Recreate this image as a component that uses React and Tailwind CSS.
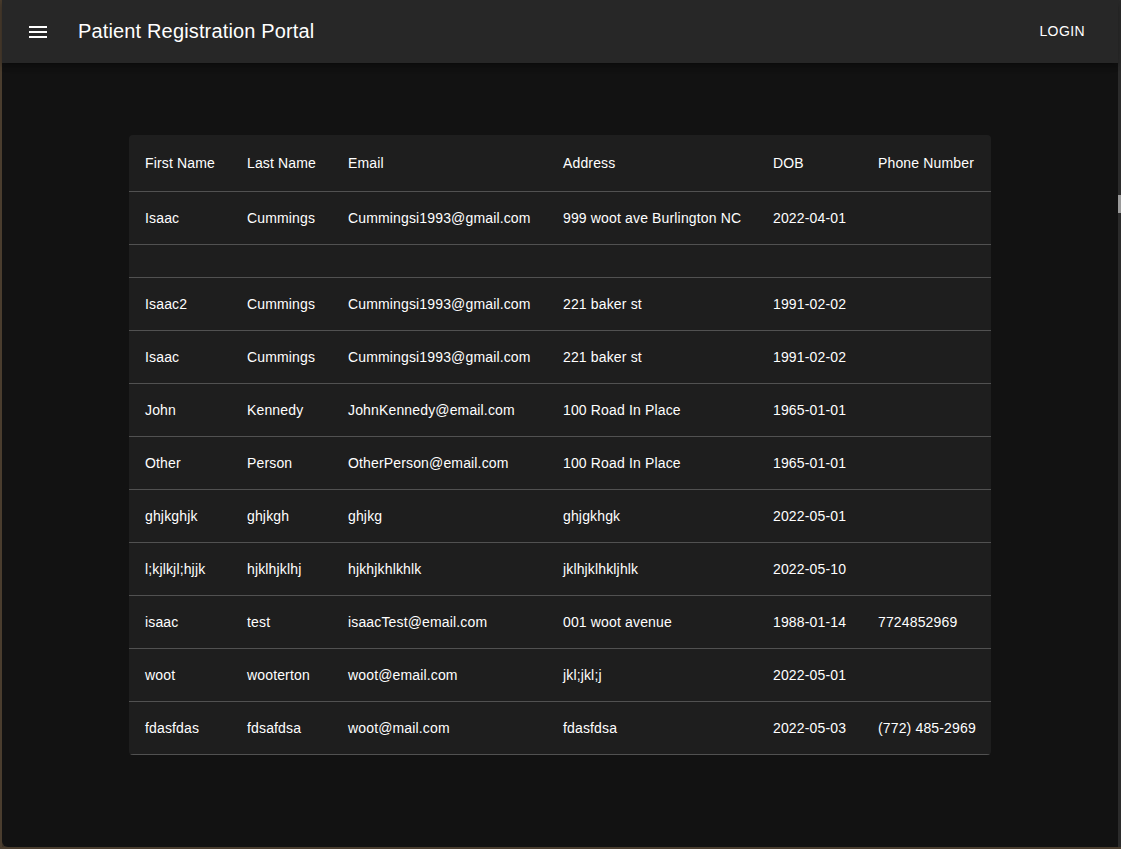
const ROWS = [
  ['Isaac', 'Cummings', 'Cummingsi1993@gmail.com', '999 woot ave Burlington NC', '2022-04-01', ''],
  null,
  ['Isaac2', 'Cummings', 'Cummingsi1993@gmail.com', '221 baker st', '1991-02-02', ''],
  ['Isaac', 'Cummings', 'Cummingsi1993@gmail.com', '221 baker st', '1991-02-02', ''],
  ['John', 'Kennedy', 'JohnKennedy@email.com', '100 Road In Place', '1965-01-01', ''],
  ['Other', 'Person', 'OtherPerson@email.com', '100 Road In Place', '1965-01-01', ''],
  ['ghjkghjk', 'ghjkgh', 'ghjkg', 'ghjgkhgk', '2022-05-01', ''],
  ['l;kjlkjl;hjjk', 'hjklhjklhj', 'hjkhjkhlkhlk', 'jklhjklhkljhlk', '2022-05-10', ''],
  ['isaac', 'test', 'isaacTest@email.com', '001 woot avenue', '1988-01-14', '7724852969'],
  ['woot', 'wooterton', 'woot@email.com', 'jkl;jkl;j', '2022-05-01', ''],
  ['fdasfdas', 'fdsafdsa', 'woot@mail.com', 'fdasfdsa', '2022-05-03', '(772) 485-2969'],
];

const HEADERS = ['First Name', 'Last Name', 'Email', 'Address', 'DOB', 'Phone Number'];
const WIDTHS = ['w-[102px]', 'w-[101px]', 'w-[215px]', 'w-[210px]', 'w-[105px]', 'w-[129px]'];

function MenuIcon() {
  return (
    <svg viewBox="0 0 24 24" className="h-6 w-6" fill="white">
      <path d="M3 18h18v-2H3v2zm0-5h18v-2H3v2zm0-7v2h18V6H3z" />
    </svg>
  );
}

export default function App() {
  return (
    <div
      className="flex h-[849px] w-[1121px] flex-col overflow-hidden bg-[#3b3126]"
      style={{ fontFamily: '"Liberation Sans", Arial, sans-serif' }}
    >
      <div className="flex flex-1">
        <div className="w-[2px] bg-[#4a3d2e]" />
        <div className="flex flex-1 flex-col rounded-bl-[6px] bg-[#121212]">
          {/* App bar */}
          <header className="relative z-10 flex h-[63px] items-center bg-[#272727] pl-[24px] pr-[33px] shadow-[0_2px_4px_-1px_rgba(0,0,0,0.2),0_4px_5px_0_rgba(0,0,0,0.14),0_1px_10px_0_rgba(0,0,0,0.12)]">
            <MenuIcon />
            <h1 className="ml-[28px] -mt-[2px] text-[20px] tracking-[0.15px] text-white">Patient Registration Portal</h1>
            <span className="ml-auto text-[14px] font-medium tracking-[0.4px] text-white">LOGIN</span>
          </header>

          {/* Table */}
          <div className="pl-[127px] pt-[72px]">
            <div className="w-[862px] overflow-hidden rounded bg-[#1e1e1e]">
              <table className="w-full table-fixed border-collapse text-left text-[14px] tracking-[0.15px] text-white">
                <thead>
                  <tr className="border-b border-[#515151]">
                    {HEADERS.map((h, i) => (
                      <th key={h} className={`${WIDTHS[i]} h-[56px] whitespace-nowrap px-4 pt-[1px] font-normal`}>
                        {h}
                      </th>
                    ))}
                  </tr>
                </thead>
                <tbody>
                  {ROWS.map((r, i) =>
                    r ? (
                      <tr key={i} className="border-b border-[#515151]">
                        {r.map((c, j) => (
                          <td key={j} className="h-[53px] whitespace-nowrap px-4 pt-[1px]">
                            {c}
                          </td>
                        ))}
                      </tr>
                    ) : (
                      <tr key={i} className="border-b border-[#515151]">
                        <td colSpan={6} className="h-[33px]" />
                      </tr>
                    )
                  )}
                </tbody>
              </table>
            </div>
          </div>
        </div>
        <div className="flex w-[3px] flex-col bg-[#2b2b2b]">
          <div className="mt-[195px] h-[18px] bg-[#9a9a9a]" />
        </div>
      </div>
      <div className="h-[2px] bg-[#4a3d2e]" />
    </div>
  );
}
